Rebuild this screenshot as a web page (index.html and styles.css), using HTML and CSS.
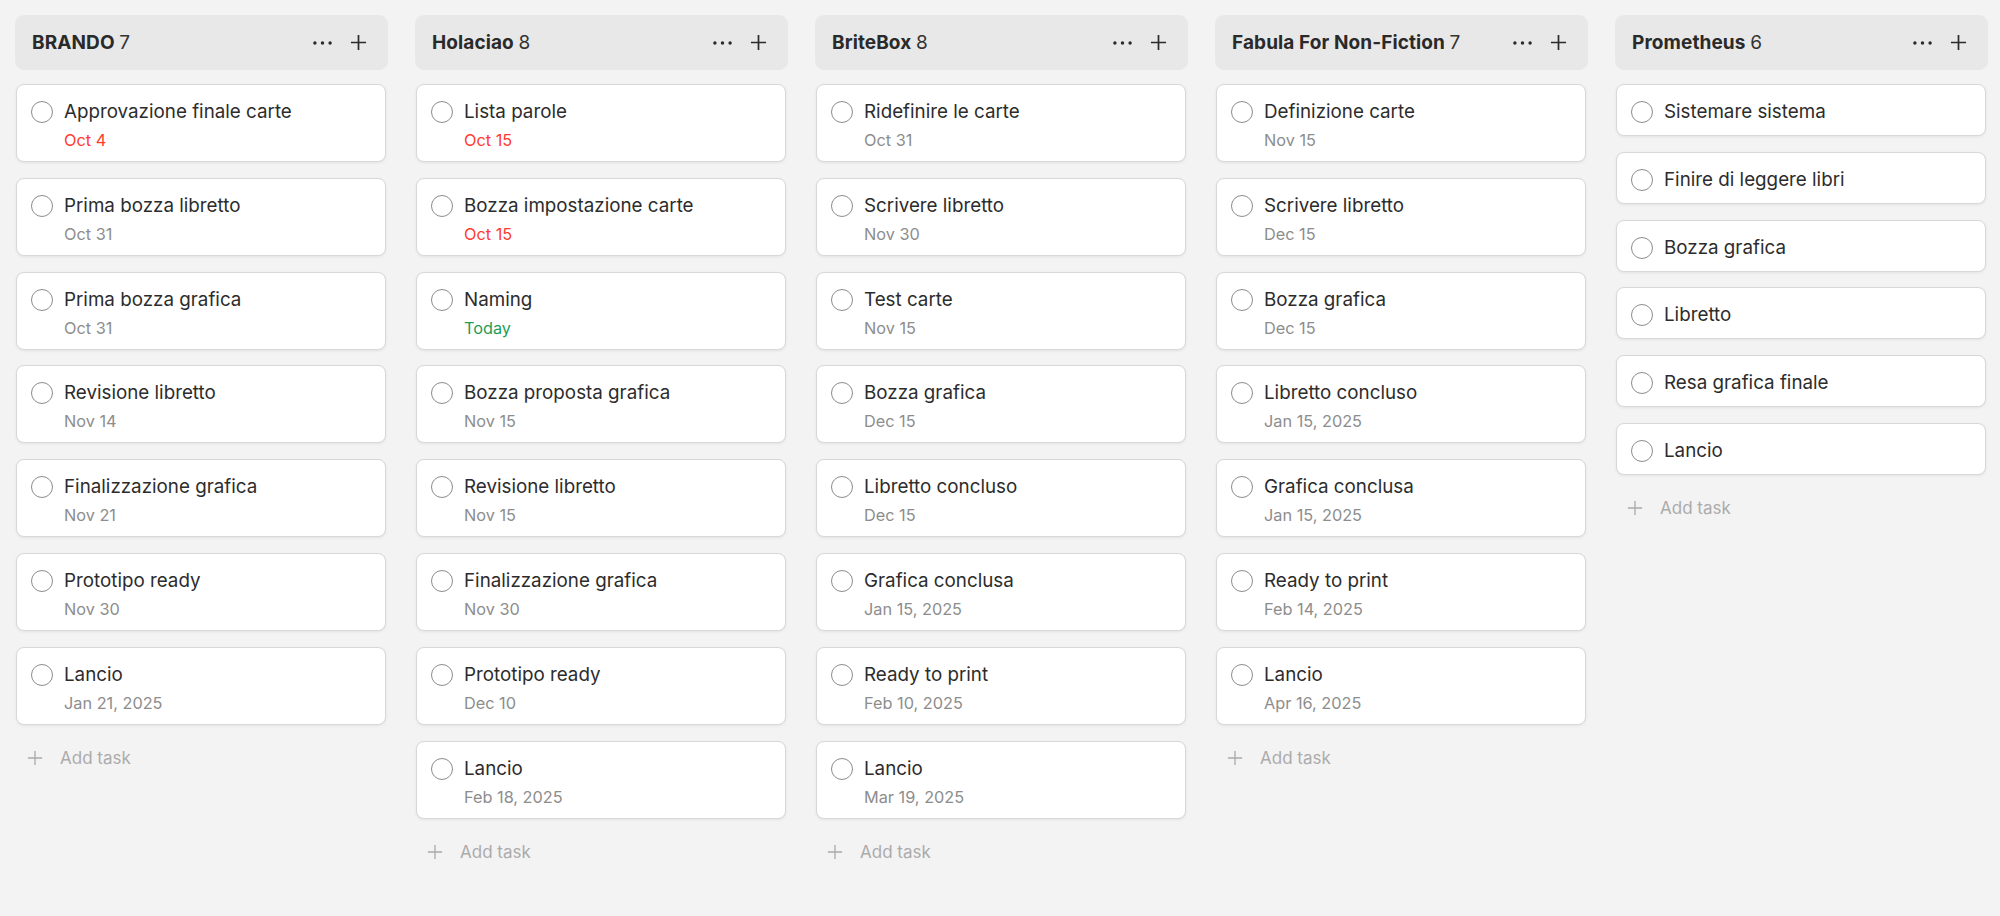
FILE: index.html
```html
<!DOCTYPE html>
<html lang="it">
<head>
<meta charset="utf-8">
<title>Board</title>
<link rel="stylesheet" href="styles.css">
</head>
<body>
<svg width="0" height="0" class="defs">
  <defs>
    <symbol id="i-dots" viewBox="0 0 20 4"><circle cx="2" cy="2" r="1.8"/><circle cx="10" cy="2" r="1.8"/><circle cx="18" cy="2" r="1.8"/></symbol>
    <symbol id="i-plus" viewBox="0 0 18 18"><path d="M9 1v16M1 9h16"/></symbol>
  </defs>
</svg>
<main class="board">
  <section class="column">
    <header class="col-head"><h2 class="col-title">BRANDO <span class="col-count">7</span></h2><div class="col-actions"><svg class="ic-dots"><use href="#i-dots"/></svg><svg class="ic-plus"><use href="#i-plus"/></svg></div></header>
    <ul class="tasks">
      <li class="card"><div class="row"><span class="check"></span><span class="title">Approvazione finale carte</span></div><div class="date overdue">Oct 4</div></li>
      <li class="card"><div class="row"><span class="check"></span><span class="title">Prima bozza libretto</span></div><div class="date">Oct 31</div></li>
      <li class="card"><div class="row"><span class="check"></span><span class="title">Prima bozza grafica</span></div><div class="date">Oct 31</div></li>
      <li class="card"><div class="row"><span class="check"></span><span class="title">Revisione libretto</span></div><div class="date">Nov 14</div></li>
      <li class="card"><div class="row"><span class="check"></span><span class="title">Finalizzazione grafica</span></div><div class="date">Nov 21</div></li>
      <li class="card"><div class="row"><span class="check"></span><span class="title">Prototipo ready</span></div><div class="date">Nov 30</div></li>
      <li class="card"><div class="row"><span class="check"></span><span class="title">Lancio</span></div><div class="date">Jan 21, 2025</div></li>
    </ul>
    <div class="add"><svg class="ic-add"><use href="#i-plus"/></svg><span>Add task</span></div>
  </section>

  <section class="column">
    <header class="col-head"><h2 class="col-title">Holaciao <span class="col-count">8</span></h2><div class="col-actions"><svg class="ic-dots"><use href="#i-dots"/></svg><svg class="ic-plus"><use href="#i-plus"/></svg></div></header>
    <ul class="tasks">
      <li class="card"><div class="row"><span class="check"></span><span class="title">Lista parole</span></div><div class="date overdue">Oct 15</div></li>
      <li class="card"><div class="row"><span class="check"></span><span class="title">Bozza impostazione carte</span></div><div class="date overdue">Oct 15</div></li>
      <li class="card"><div class="row"><span class="check"></span><span class="title">Naming</span></div><div class="date today">Today</div></li>
      <li class="card"><div class="row"><span class="check"></span><span class="title">Bozza proposta grafica</span></div><div class="date">Nov 15</div></li>
      <li class="card"><div class="row"><span class="check"></span><span class="title">Revisione libretto</span></div><div class="date">Nov 15</div></li>
      <li class="card"><div class="row"><span class="check"></span><span class="title">Finalizzazione grafica</span></div><div class="date">Nov 30</div></li>
      <li class="card"><div class="row"><span class="check"></span><span class="title">Prototipo ready</span></div><div class="date">Dec 10</div></li>
      <li class="card"><div class="row"><span class="check"></span><span class="title">Lancio</span></div><div class="date">Feb 18, 2025</div></li>
    </ul>
    <div class="add"><svg class="ic-add"><use href="#i-plus"/></svg><span>Add task</span></div>
  </section>

  <section class="column">
    <header class="col-head"><h2 class="col-title">BriteBox <span class="col-count">8</span></h2><div class="col-actions"><svg class="ic-dots"><use href="#i-dots"/></svg><svg class="ic-plus"><use href="#i-plus"/></svg></div></header>
    <ul class="tasks">
      <li class="card"><div class="row"><span class="check"></span><span class="title">Ridefinire le carte</span></div><div class="date">Oct 31</div></li>
      <li class="card"><div class="row"><span class="check"></span><span class="title">Scrivere libretto</span></div><div class="date">Nov 30</div></li>
      <li class="card"><div class="row"><span class="check"></span><span class="title">Test carte</span></div><div class="date">Nov 15</div></li>
      <li class="card"><div class="row"><span class="check"></span><span class="title">Bozza grafica</span></div><div class="date">Dec 15</div></li>
      <li class="card"><div class="row"><span class="check"></span><span class="title">Libretto concluso</span></div><div class="date">Dec 15</div></li>
      <li class="card"><div class="row"><span class="check"></span><span class="title">Grafica conclusa</span></div><div class="date">Jan 15, 2025</div></li>
      <li class="card"><div class="row"><span class="check"></span><span class="title">Ready to print</span></div><div class="date">Feb 10, 2025</div></li>
      <li class="card"><div class="row"><span class="check"></span><span class="title">Lancio</span></div><div class="date">Mar 19, 2025</div></li>
    </ul>
    <div class="add"><svg class="ic-add"><use href="#i-plus"/></svg><span>Add task</span></div>
  </section>

  <section class="column">
    <header class="col-head"><h2 class="col-title">Fabula For Non-Fiction <span class="col-count">7</span></h2><div class="col-actions"><svg class="ic-dots"><use href="#i-dots"/></svg><svg class="ic-plus"><use href="#i-plus"/></svg></div></header>
    <ul class="tasks">
      <li class="card"><div class="row"><span class="check"></span><span class="title">Definizione carte</span></div><div class="date">Nov 15</div></li>
      <li class="card"><div class="row"><span class="check"></span><span class="title">Scrivere libretto</span></div><div class="date">Dec 15</div></li>
      <li class="card"><div class="row"><span class="check"></span><span class="title">Bozza grafica</span></div><div class="date">Dec 15</div></li>
      <li class="card"><div class="row"><span class="check"></span><span class="title">Libretto concluso</span></div><div class="date">Jan 15, 2025</div></li>
      <li class="card"><div class="row"><span class="check"></span><span class="title">Grafica conclusa</span></div><div class="date">Jan 15, 2025</div></li>
      <li class="card"><div class="row"><span class="check"></span><span class="title">Ready to print</span></div><div class="date">Feb 14, 2025</div></li>
      <li class="card"><div class="row"><span class="check"></span><span class="title">Lancio</span></div><div class="date">Apr 16, 2025</div></li>
    </ul>
    <div class="add"><svg class="ic-add"><use href="#i-plus"/></svg><span>Add task</span></div>
  </section>

  <section class="column">
    <header class="col-head"><h2 class="col-title">Prometheus <span class="col-count">6</span></h2><div class="col-actions"><svg class="ic-dots"><use href="#i-dots"/></svg><svg class="ic-plus"><use href="#i-plus"/></svg></div></header>
    <ul class="tasks">
      <li class="card"><div class="row"><span class="check"></span><span class="title">Sistemare sistema</span></div></li>
      <li class="card"><div class="row"><span class="check"></span><span class="title">Finire di leggere libri</span></div></li>
      <li class="card"><div class="row"><span class="check"></span><span class="title">Bozza grafica</span></div></li>
      <li class="card"><div class="row"><span class="check"></span><span class="title">Libretto</span></div></li>
      <li class="card"><div class="row"><span class="check"></span><span class="title">Resa grafica finale</span></div></li>
      <li class="card"><div class="row"><span class="check"></span><span class="title">Lancio</span></div></li>
    </ul>
    <div class="add"><svg class="ic-add"><use href="#i-plus"/></svg><span>Add task</span></div>
  </section>
</main>
</body>
</html>
```

FILE: styles.css
```css
* { box-sizing: border-box; }
html, body { margin: 0; height: 100%; }
body {
  background: #f3f3f3;
  font-family: Inter, "Liberation Sans", sans-serif;
  color: #2b2b2b;
  overflow: hidden;
}
.defs { position: absolute; width: 0; height: 0; }
.board {
  display: flex;
  gap: 27px;
  padding: 15px;
  align-items: flex-start;
}
.column {
  width: 373px;
  flex: none;
  display: flex;
  flex-direction: column;
}
.col-head {
  height: 55px;
  background: #e8e8e8;
  border-radius: 9px;
  display: flex;
  align-items: center;
  justify-content: space-between;
  padding: 0 21px 0 17px;
}
.col-title {
  margin: 0;
  font-size: 19px;
  font-weight: 700;
  color: #2a2a2a;
  letter-spacing: 0.1px;
}
.col-count { font-weight: 400; color: #333; }
.col-actions { display: flex; align-items: center; gap: 18px; }
.ic-dots { width: 19px; height: 4px; fill: #2a2a2a; }
.ic-plus { width: 17px; height: 17px; stroke: #2a2a2a; stroke-width: 1.8; fill: none; }
.tasks {
  list-style: none;
  margin: 14px 2px 0 1px;
  padding: 0;
  display: flex;
  flex-direction: column;
  gap: 15.8px;
}
.card {
  background: #fff;
  border: 1px solid #d8d8d8;
  border-radius: 8px;
  box-shadow: 0 1px 3px rgba(0, 0, 0, 0.07);
  padding: 14px 14px 10px;
  display: flex;
  flex-direction: column;
  gap: 4px;
}
.row { display: flex; align-items: center; gap: 11px; height: 26px; }
.check {
  width: 22px;
  height: 22px;
  border: 1.5px solid #8c8c8c;
  border-radius: 50%;
  flex: none;
}
.title { font-size: 18.8px; line-height: 26px; color: #2c2c2c; }
.date { font-size: 16.3px; line-height: 22px; color: #8d8d8d; padding-left: 33px; }
.date.overdue { color: #ff3b30; }
.date.today { color: #1f9d55; }
.add {
  display: flex;
  align-items: center;
  gap: 17px;
  height: 34px;
  margin-top: 16px;
  padding-left: 12px;
  color: #ababab;
  font-size: 17px;
}
.ic-add { width: 16px; height: 16px; stroke: #ababab; stroke-width: 1.5; fill: none; flex: none; }
```
